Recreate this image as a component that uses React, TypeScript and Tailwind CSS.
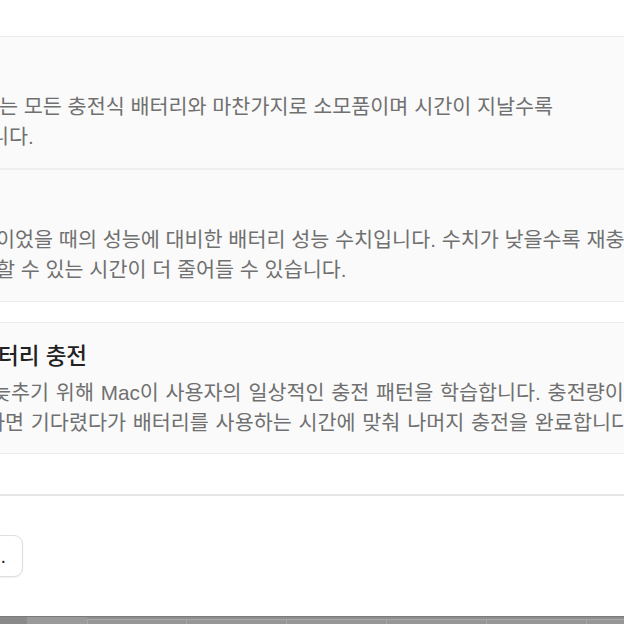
export default function App() {
  const font = "[font-family:'Liberation_Sans','Noto_Sans_CJK_KR',sans-serif]";
  return (
    <div className={`w-[624px] h-[624px] overflow-hidden bg-white flex flex-col ${font}`}>
      <div className="h-[36px] shrink-0 bg-white" />

      {/* Box 1 */}
      <div className="shrink-0 border-t border-[#ededed] border-b-2 border-b-[#efefef] bg-[#fafafa] h-[134px] pt-[20px] flex flex-col">
        <div className="h-[28px]" />
        <div className="mt-[7px] text-[20.7px] leading-[30px] text-[#707070] whitespace-nowrap">
          <div className="ml-[-1px]">는 모든 충전식 배터리와 마찬가지로 소모품이며 시간이 지날수록</div>
          <div className="ml-[-10px]">니다.</div>
        </div>
      </div>

      {/* Box 2 */}
      <div className="shrink-0 border-b border-[#ececec] bg-[#fafafa] h-[132px] pt-[20px] flex flex-col">
        <div className="h-[28px]" />
        <div className="mt-[7px] text-[20.7px] leading-[30px] text-[#707070] whitespace-nowrap">
          <div className="ml-[-4px]">이었을 때의 성능에 대비한 배터리 성능 수치입니다. 수치가 낮을수록 재충전이 필요하기 전까지</div>
          <div className="ml-[-4px]">할 수 있는 시간이 더 줄어들 수 있습니다.</div>
        </div>
      </div>

      <div className="h-[20px] shrink-0 bg-white" />

      {/* Box 3 */}
      <div className="shrink-0 border-t border-b border-[#ebebeb] bg-[#fafafa] h-[132px] pt-[20px] flex flex-col">
        <div className="h-[28px] leading-[28px] text-[22.5px] font-medium text-[#222222] whitespace-nowrap ml-[-2px]">터리 충전</div>
        <div className="mt-[7px] text-[20.7px] leading-[30px] text-[#707070] whitespace-nowrap [word-spacing:1px]">
          <div className="ml-[-8px]">늦추기 위해 Mac이 사용자의 일상적인 충전 패턴을 학습합니다. 충전량이 80%에 도달하</div>
          <div className="ml-[-14px]">하면 기다렸다가 배터리를 사용하는 시간에 맞춰 나머지 충전을 완료합니다.</div>
        </div>
      </div>

      <div className="h-[40px] shrink-0 bg-white" />
      <div className="h-[2px] shrink-0 bg-[#e5e5e5]" />

      <div className="h-[39px] shrink-0" />
      <div className="shrink-0 flex">
        <div className="ml-[-77px] w-[100px] h-[42px] rounded-[9px] border border-[#dedede] bg-white shadow-[0_1px_2px_rgba(0,0,0,0.06)] flex items-center justify-end pr-[16px] text-[20px] text-[#1d1d1f]">
          ...
        </div>
      </div>

      <div className="flex-1" />

      {/* bottom strip */}
      <div className="h-[8px] shrink-0 flex bg-[#8f8f8f] border-t border-[#7a7a7a]">
        <div className="w-[27px] bg-[#8a8a8a]" />
        <div className="w-[60px] bg-[#9a9a9a]" />
        <div className="w-[99px] mt-[2px] bg-[#969696] border-l border-t border-[#a8a8a8]" />
        <div className="w-[100px] mt-[2px] bg-[#969696] border-l border-t border-[#a8a8a8]" />
        <div className="w-[100px] mt-[2px] bg-[#969696] border-l border-t border-[#a8a8a8]" />
        <div className="w-[100px] mt-[2px] bg-[#969696] border-l border-t border-[#a8a8a8]" />
        <div className="w-[100px] mt-[2px] bg-[#969696] border-l border-t border-[#a8a8a8]" />
        <div className="flex-1 mt-[2px] bg-[#969696] border-l border-t border-[#a8a8a8]" />
      </div>
    </div>
  );
}
